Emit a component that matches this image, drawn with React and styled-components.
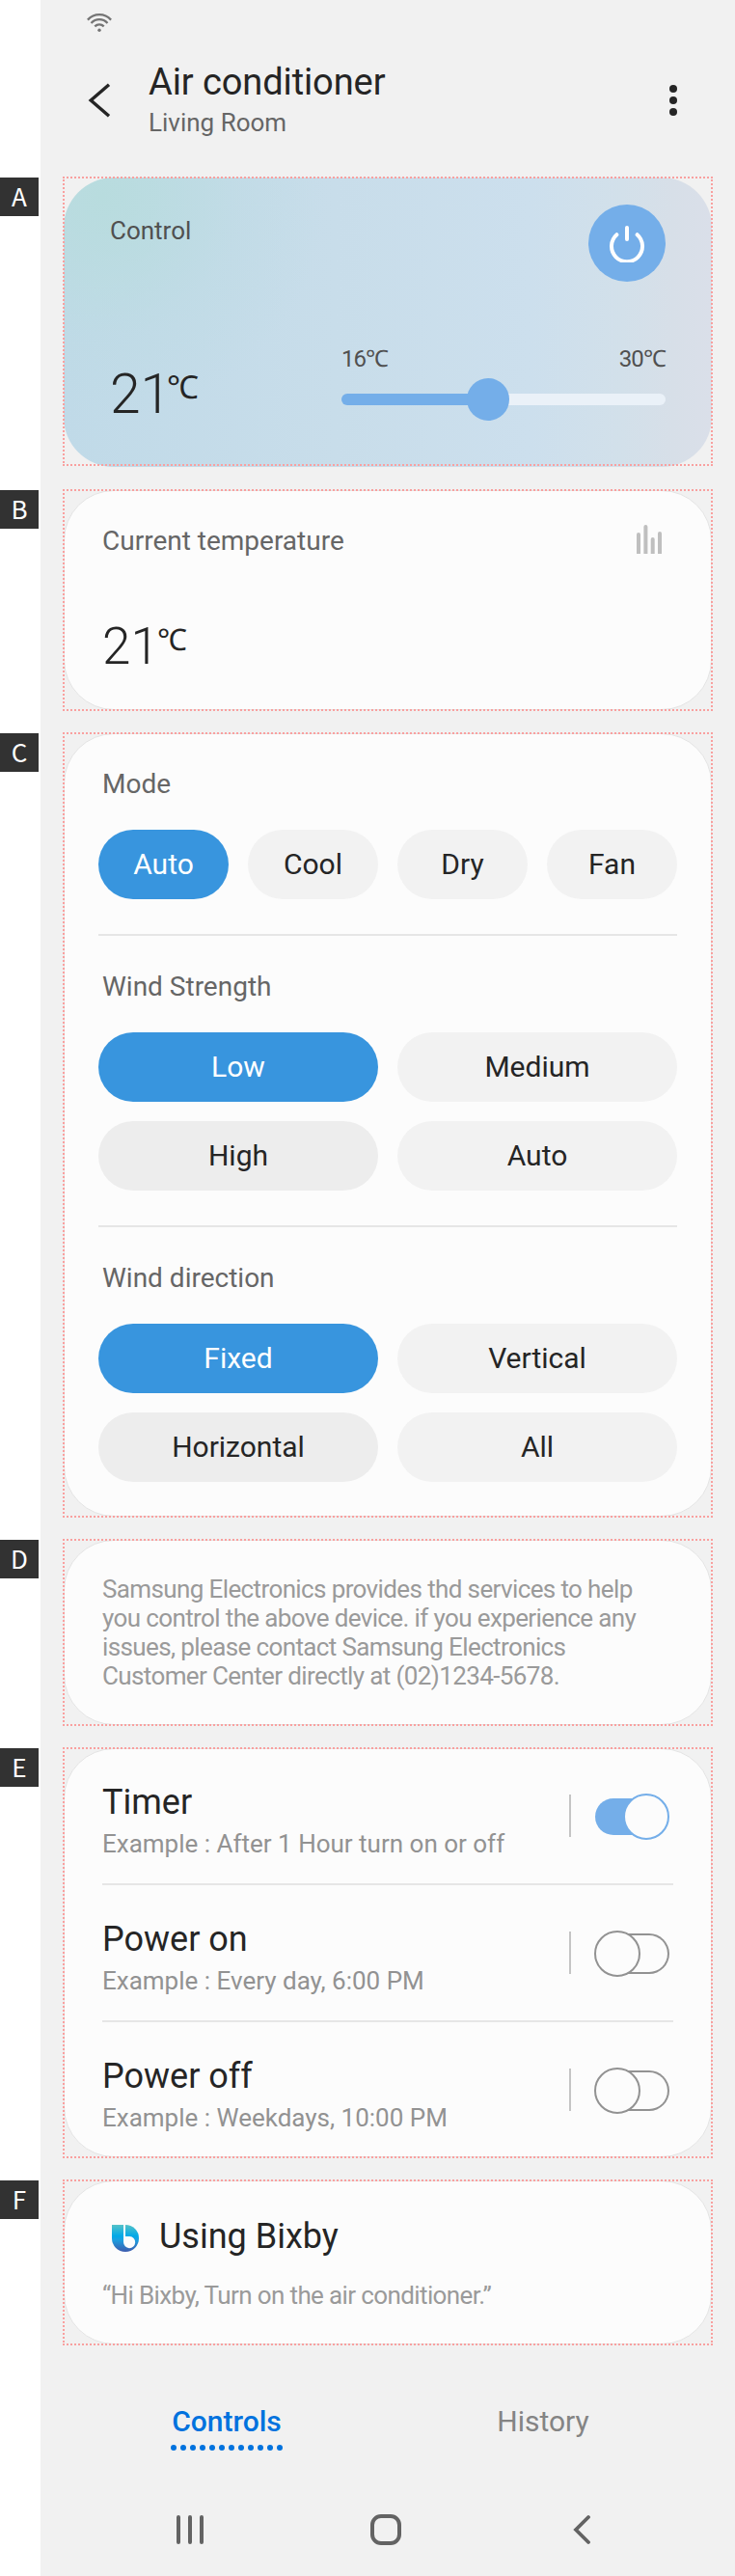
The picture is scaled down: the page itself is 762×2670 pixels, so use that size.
import React from 'react';
import styled, { createGlobalStyle, css } from 'styled-components';

const GlobalStyle = createGlobalStyle`
  *, *::before, *::after { box-sizing: border-box; }
  body {
    margin: 0;
    font-family: Roboto, "Liberation Sans", sans-serif;
    color: #252525;
    background: #fff;
  }
  h1, h2, h3, p { margin: 0; font-weight: 400; }
  svg { display: block; flex: none; }
  button { font: inherit; border: 0; padding: 0; background: none; color: inherit; }
`;

const Page = styled.div`
  width: 762px;
  min-height: 2670px;
  background: linear-gradient(90deg, #fff 42px, #f1f1f1 42px);
`;

const StatusBar = styled.div`
  height: 62px;
  padding: 14px 0 0 90px;
`;

const Header = styled.header`
  display: flex;
  height: 121px;
  padding: 0 60px 0 91px;
`;

const HeaderButton = styled.button`
  align-self: flex-start;
  margin-top: 24px;
`;

const Heading = styled.div`
  flex: 1;
  margin-left: 39px;
`;

const DeviceName = styled.h1`
  font-size: 38px;
  line-height: 46px;
  letter-spacing: -0.1px;
`;

const RoomName = styled.p`
  margin-top: 3px;
  font-size: 26px;
  line-height: 32px;
  color: #666;
`;

const Section = styled.section`
  display: flex;
  align-items: flex-start;
  margin-bottom: ${(p) => p.$gap}px;
`;

const Badge = styled.span`
  width: 40px;
  height: 40px;
  margin: 1px 25px 0 0;
  background: #323232;
  color: #fff;
  font: 400 26px/38px "Noto Sans CJK KR", sans-serif;
  text-align: center;
`;

const Frame = styled.div`
  position: relative;
  width: 674px;
  height: ${(p) => p.$height}px;
  padding: 1px;

  &::after {
    content: '';
    position: absolute;
    inset: 0;
    border: 2px dotted #f9a09f;
    pointer-events: none;
  }
`;

const Card = styled.div`
  height: 100%;
  border: 1px solid #e4e4e4;
  border-radius: 52px;
  background: #fcfcfc;
`;

const ControlCard = styled.div`
  height: 300px;
  padding: 28px 48px 0;
  border-radius: 52px;
  background:
    radial-gradient(ellipse 230px 230px at 40px 20px, #b8dcde 0, rgba(184, 220, 222, 0.72) 25%, rgba(187, 219, 225, 0.32) 62%, rgba(190, 219, 228, 0) 100%),
    linear-gradient(90deg, #c0dae8 0%, #c8ddea 42%, #ccdfed 72%, #d2e0ea 86%, #d7dfe8 94%, #dadfe9 100%);
`;

const ControlTop = styled.div`
  display: flex;
  justify-content: space-between;
`;

const ControlLabel = styled.h2`
  font-size: 26px;
  line-height: 54px;
  color: #505050;
`;

const PowerButton = styled.button`
  display: grid;
  place-items: center;
  width: 80px;
  height: 80px;
  border-radius: 50%;
  background: #74aee9;
`;

const ControlBottom = styled.div`
  display: flex;
  justify-content: space-between;
  margin-top: 66px;
`;

const Temperature = styled.div`
  display: flex;
  font-size: ${(p) => (p.$large ? 57 : 53)}px;
  line-height: 60px;
  font-weight: 300;
  ${(p) => p.$large && css`margin-top: 21px;`}
`;

const Unit = styled.span`
  margin-left: ${(p) => (p.$large ? -4 : -2)}px;
  font-size: ${(p) => (p.$large ? 33 : 31)}px;
  line-height: ${(p) => (p.$large ? 45 : 47)}px;
  font-weight: 400;
`;

const SliderBlock = styled.div`
  width: 336px;
`;

const SliderLabels = styled.div`
  display: flex;
  justify-content: space-between;
  margin-bottom: 6px;
  font-size: 24px;
  line-height: 28px;
  letter-spacing: -0.9px;
  color: #505050;
`;

const Slider = styled.div`
  display: flex;
  align-items: center;
  height: 44px;
`;

const SliderFill = styled.div`
  width: 136px;
  height: 12px;
  border-radius: 6px 0 0 6px;
  background: #74aee9;
`;

const SliderRest = styled.div`
  flex: 1;
  height: 12px;
  margin-left: -4px;
  border-radius: 0 6px 6px 0;
  background: #eaf1f8;
`;

const SliderKnob = styled.div`
  z-index: 1;
  width: 44px;
  height: 44px;
  margin-left: -6px;
  border-radius: 50%;
  background: #74aee9;
`;

const CurrentCard = styled(Card)`
  padding: 31px 51px 0 39px;
`;

const CurrentTop = styled.div`
  display: flex;
  justify-content: space-between;
  height: 40px;
  margin-bottom: 60px;

  svg { margin-top: 4px; }
`;

const Label = styled.h2`
  height: 40px;
  font-size: 28px;
  line-height: 42px;
  color: #666;
`;

const OptionsCard = styled(Card)`
  padding: 31px 35px 0;
`;

const OptionGroup = styled.div`
  & + & {
    margin-top: 36px;
    padding-top: 32px;
    border-top: 2px solid #e6e6e6;
  }
  ${Label} { padding-left: 4px; }
`;

const Options = styled.div`
  display: grid;
  grid-template-columns: repeat(${(p) => p.$columns}, 1fr);
  gap: 20px;
  margin-top: 28px;
`;

const toneStyles = {
  active: css`background: #3895de; color: #fff;`,
  pressed: css`background: #ededed;`,
  normal: css`background: #f2f2f2;`,
};

const Option = styled.button`
  height: 72px;
  border-radius: 36px;
  font-size: 30px;
  line-height: 72px;
  text-align: center;
  ${(p) => toneStyles[p.$tone]}
`;

const NoticeCard = styled(Card)`
  padding: 35px 39px;
`;

const Notice = styled.p`
  font-size: 26px;
  line-height: 30px;
  letter-spacing: -0.62px;
  color: #9a9a9a;
`;

const ScheduleCard = styled(Card)`
  padding: 0 39px;
`;

const Schedule = styled.div`
  display: flex;
  height: ${(p) => (p.$first ? 139 : 142)}px;
  padding: ${(p) => (p.$first ? 31 : 32)}px 4px 0 0;

  & + & { border-top: 2px solid #e6e6e6; }
`;

const ScheduleText = styled.div`
  flex: 1;
`;

const ItemTitle = styled.h3`
  font-size: 36px;
  line-height: 48px;
`;

const Example = styled.p`
  margin-top: 3px;
  font-size: 26px;
  line-height: 32px;
  color: #929292;
`;

const Separator = styled.div`
  width: 2px;
  height: 44px;
  margin: 16px 24px 0 0;
  background: #c4c4c4;
`;

const Switch = styled.div`
  display: flex;
  align-items: center;
  justify-content: ${(p) => (p.$on ? 'flex-end' : 'flex-start')};
  width: 78px;
  height: 48px;
  margin-top: 15px;
`;

const SwitchTrack = styled.div`
  flex: none;
  width: ${(p) => (p.$on ? 54 : 58)}px;
  height: ${(p) => (p.$on ? 38 : 42)}px;
  ${(p) =>
    p.$on
      ? css`
          margin-right: -25px;
          border-radius: 19px 0 0 19px;
          background: #74aee9;
        `
      : css`
          order: 1;
          margin-left: -28px;
          border: 2px solid #929292;
          border-left: 0;
          border-radius: 0 21px 21px 0;
        `}
`;

const SwitchKnob = styled.div`
  z-index: 1;
  flex: none;
  width: 48px;
  height: 48px;
  border: 2px solid ${(p) => (p.$on ? '#74aee9' : '#929292')};
  border-radius: 50%;
  background: #fcfcfc;
`;

const BixbyCard = styled(Card)`
  padding: 33px 39px 0;
`;

const BixbyTitle = styled.div`
  display: flex;
  gap: 21px;
  padding-left: 10px;

  svg { margin-top: 12px; }
`;

const Quote = styled(Notice)`
  margin-top: 21px;
  line-height: 32px;
`;

const Tabs = styled.nav`
  display: grid;
  grid-template-columns: 1fr 1fr;
  justify-items: center;
  align-items: start;
  height: 116px;
  margin-top: 59px;
  padding: 0 35px 0 71px;
`;

const Tab = styled.button`
  display: flex;
  flex-direction: column;
  align-items: center;
  gap: 4px;
  font-size: 30px;
  line-height: 40px;
  color: ${(p) => (p.$active ? '#0072de' : '#848484')};
  font-weight: ${(p) => (p.$active ? 500 : 400)};
`;

const SystemBar = styled.div`
  display: grid;
  grid-template-columns: repeat(3, 1fr);
  place-items: center;
  height: 32px;
  padding: 0 57px 0 95px;
`;

const WifiIcon = () => (
  <svg width="26" height="20" viewBox="0 0 26 20" fill="none" stroke="#747474" strokeWidth="2.3">
    <path d="M0.9 6.6C7.5 -0.6 18.5 -0.6 25.1 6.6" />
    <path d="M4.5 10C9.3 4.9 16.7 4.9 21.5 10" />
    <path d="M8.3 13.4C11 10.6 15 10.6 17.7 13.4" />
    <circle cx="13" cy="17.3" r="1.7" fill="#747474" stroke="none" />
  </svg>
);

const BackIcon = () => (
  <svg width="24" height="36" viewBox="0 0 24 36" fill="none" stroke="#252525" strokeWidth="3.4">
    <path d="M22 1.8L3.2 18L22 34.2" />
  </svg>
);

const MoreIcon = () => (
  <svg width="8" height="36" viewBox="0 0 8 36" fill="#252525">
    <circle cx="4" cy="6" r="4" />
    <circle cx="4" cy="18" r="4" />
    <circle cx="4" cy="30" r="4" />
  </svg>
);

const PowerIcon = () => (
  <svg width="40" height="40" viewBox="0 0 40 40" fill="none" stroke="#fff" strokeWidth="4" strokeLinecap="round">
    <path d="M20 4V16" />
    <path d="M9.4 11.2A16 16 0 1 0 30.6 11.2" />
  </svg>
);

const ChartIcon = () => (
  <svg width="26" height="30" viewBox="0 0 26 30" fill="#bfbfbf">
    <path d="M0 30V10a2 2 0 0 1 4 0V30z" />
    <path d="M7.4 30V2a2 2 0 0 1 4 0V30z" />
    <path d="M14.7 30V15a2 2 0 0 1 4 0V30z" />
    <path d="M22 30V9a2 2 0 0 1 4 0V30z" />
  </svg>
);

const BixbyIcon = () => (
  <svg width="28" height="28" viewBox="0 0 28 28">
    <defs>
      <linearGradient id="bixby" x1="0" y1="0" x2="0" y2="1">
        <stop offset="0" stopColor="#55c2c8" />
        <stop offset="0.42" stopColor="#00a9e8" />
        <stop offset="0.55" stopColor="#1ba0e0" />
        <stop offset="1" stopColor="#3d5aad" />
      </linearGradient>
    </defs>
    <path d="M0 0H14A14 14 0 0 1 14 28A14 14 0 0 1 0 14Z" fill="url(#bixby)" />
    <path d="M12 0H14V12H18.5A6.1 6.1 0 1 1 12 18.1Z" fill="#fcfcfc" />
  </svg>
);

const DotsUnderline = () => (
  <svg width="116" height="6" viewBox="0 0 116 6" fill="#0072de">
    {Array.from({ length: 12 }, (_, i) => (
      <circle key={i} cx={3 + i * 10} cy="3" r="3" />
    ))}
  </svg>
);

const RecentsIcon = () => (
  <svg width="28" height="30" viewBox="0 0 28 30" stroke="#636363" strokeWidth="4" strokeLinecap="round">
    <path d="M2 2V28M14 2V28M26 2V28" />
  </svg>
);

const HomeIcon = () => (
  <svg width="32" height="32" viewBox="0 0 32 32" fill="none" stroke="#636363" strokeWidth="4">
    <rect x="2" y="2" width="28" height="28" rx="9" />
  </svg>
);

const NavBackIcon = () => (
  <svg width="18" height="32" viewBox="0 0 18 32" fill="none" stroke="#636363" strokeWidth="3.8" strokeLinecap="round">
    <path d="M16 3L3 16L16 29" />
  </svg>
);

const optionGroups = [
  { title: 'Mode', columns: 4, options: [['Auto', 'active'], ['Cool', 'normal'], ['Dry', 'normal'], ['Fan', 'normal']] },
  { title: 'Wind Strength', columns: 2, options: [['Low', 'active'], ['Medium', 'normal'], ['High', 'pressed'], ['Auto', 'normal']] },
  { title: 'Wind direction', columns: 2, options: [['Fixed', 'active'], ['Vertical', 'normal'], ['Horizontal', 'pressed'], ['All', 'normal']] },
];

const schedules = [
  { title: 'Timer', example: 'Example : After 1 Hour turn on or off', on: true },
  { title: 'Power on', example: 'Example : Every day, 6:00 PM', on: false },
  { title: 'Power off', example: 'Example : Weekdays, 10:00 PM', on: false },
];

const Block = ({ letter, height, gap = 22, children }) => (
  <Section $gap={gap}>
    <Badge>{letter}</Badge>
    <Frame $height={height}>{children}</Frame>
  </Section>
);

export default function App() {
  return (
    <Page>
      <GlobalStyle />
      <StatusBar><WifiIcon /></StatusBar>
      <Header>
        <HeaderButton aria-label="Back"><BackIcon /></HeaderButton>
        <Heading>
          <DeviceName>Air conditioner</DeviceName>
          <RoomName>Living Room</RoomName>
        </Heading>
        <HeaderButton aria-label="More options"><MoreIcon /></HeaderButton>
      </Header>

      <Block letter="A" height={300} gap={24}>
        <ControlCard>
          <ControlTop>
            <ControlLabel>Control</ControlLabel>
            <PowerButton aria-label="Power"><PowerIcon /></PowerButton>
          </ControlTop>
          <ControlBottom>
            <Temperature $large>21<Unit $large>℃</Unit></Temperature>
            <SliderBlock>
              <SliderLabels><span>16℃</span><span>30℃</span></SliderLabels>
              <Slider>
                <SliderFill />
                <SliderKnob />
                <SliderRest />
              </Slider>
            </SliderBlock>
          </ControlBottom>
        </ControlCard>
      </Block>

      <Block letter="B" height={230}>
        <CurrentCard>
          <CurrentTop>
            <Label>Current temperature</Label>
            <ChartIcon />
          </CurrentTop>
          <Temperature>21<Unit>℃</Unit></Temperature>
        </CurrentCard>
      </Block>

      <Block letter="C" height={814}>
        <OptionsCard>
          {optionGroups.map((group) => (
            <OptionGroup key={group.title}>
              <Label>{group.title}</Label>
              <Options $columns={group.columns}>
                {group.options.map(([name, tone]) => (
                  <Option key={name} $tone={tone}>{name}</Option>
                ))}
              </Options>
            </OptionGroup>
          ))}
        </OptionsCard>
      </Block>

      <Block letter="D" height={194}>
        <NoticeCard>
          <Notice>
            Samsung Electronics provides thd services to help<br />
            you control the above device. if you experience any<br />
            issues, please contact Samsung Electronics<br />
            Customer Center directly at (02)1234-5678.
          </Notice>
        </NoticeCard>
      </Block>

      <Block letter="E" height={426}>
        <ScheduleCard>
          {schedules.map((item, index) => (
            <Schedule key={item.title} $first={index === 0}>
              <ScheduleText>
                <ItemTitle>{item.title}</ItemTitle>
                <Example>{item.example}</Example>
              </ScheduleText>
              <Separator />
              <Switch $on={item.on}>
                <SwitchTrack $on={item.on} />
                <SwitchKnob $on={item.on} />
              </Switch>
            </Schedule>
          ))}
        </ScheduleCard>
      </Block>

      <Block letter="F" height={172}>
        <BixbyCard>
          <BixbyTitle>
            <BixbyIcon />
            <ItemTitle>Using Bixby</ItemTitle>
          </BixbyTitle>
          <Quote>“Hi Bixby, Turn on the air conditioner.”</Quote>
        </BixbyCard>
      </Block>

      <Tabs>
        <Tab $active>Controls<DotsUnderline /></Tab>
        <Tab>History</Tab>
      </Tabs>
      <SystemBar>
        <RecentsIcon />
        <HomeIcon />
        <NavBackIcon />
      </SystemBar>
    </Page>
  );
}
